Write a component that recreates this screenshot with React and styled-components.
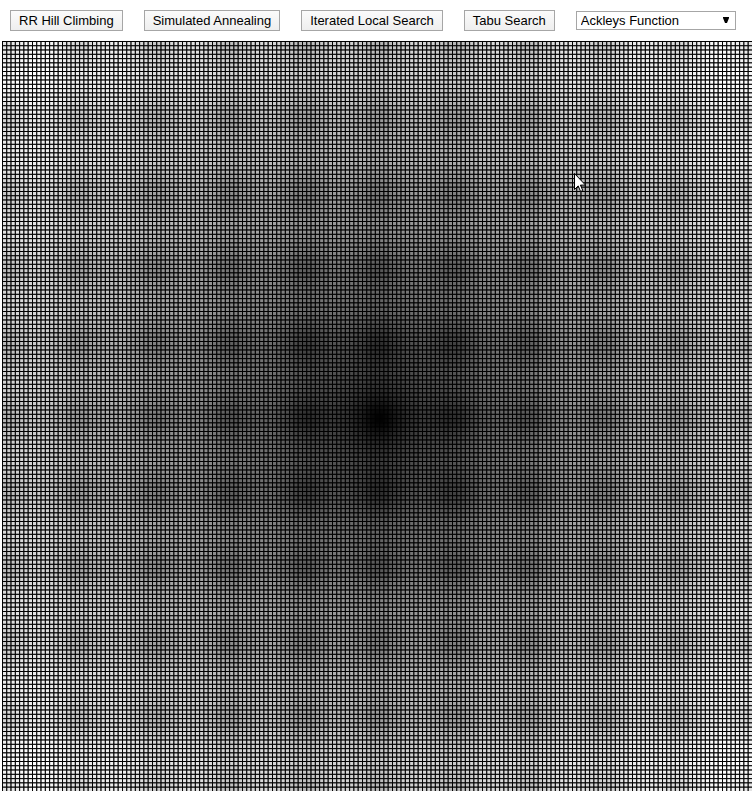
import React, { useEffect, useRef } from "react";
import styled, { createGlobalStyle } from "styled-components";

const GlobalStyle = createGlobalStyle`
  body {
    margin: 0;
    background: #fff;
    font-family: "Liberation Sans", Arial, sans-serif;
  }
`;

const Page = styled.main`
  position: relative;
  padding: 10px 1px 8px 2px;
`;

const Toolbar = styled.div`
  display: flex;
  flex-wrap: wrap;
  align-items: center;
  gap: 21px;
  padding: 0 8px 10px;
`;

const Button = styled.button`
  box-sizing: border-box;
  height: 21px;
  padding: 0 8px;
  border: 1px solid #a6a6a6;
  border-radius: 0;
  background: linear-gradient(#fbfbfb, #eeeeee);
  color: #000;
  font: 13px/15px "Liberation Sans", Arial, sans-serif;
  white-space: nowrap;
`;

const SelectBox = styled.label`
  position: relative;
  display: flex;
  width: 160px;
`;

const Select = styled.select`
  box-sizing: border-box;
  width: 100%;
  height: 19px;
  padding: 0 20px 0 4px;
  appearance: none;
  border: 1px solid #a6a6a6;
  border-radius: 0;
  background: #fff;
  color: #000;
  font: 13px/15px "Liberation Sans", Arial, sans-serif;
`;

const Arrow = styled.svg`
  position: absolute;
  top: 6px;
  right: 7px;
  width: 6px;
  height: 6px;
  pointer-events: none;
`;

const Surface = styled.canvas`
  display: block;
  width: 100%;
  aspect-ratio: 1;
`;

const Pointer = styled.svg`
  position: absolute;
  left: 574px;
  top: 173px;
  width: 12px;
  height: 19px;
  pointer-events: none;
`;

const algorithms = [
  "RR Hill Climbing",
  "Simulated Annealing",
  "Iterated Local Search",
  "Tabu Search",
];

const CELLS = 175;
const RANGE = 5;
const PEAK = 14.3;

function ackley(x, y) {
  return (
    -20 * Math.exp(-0.2 * Math.sqrt((x * x + y * y) / 2)) -
    Math.exp((Math.cos(2 * Math.PI * x) + Math.cos(2 * Math.PI * y)) / 2) +
    Math.E +
    20
  );
}

function drawSurface(canvas) {
  const size = canvas.clientWidth;
  canvas.width = size;
  canvas.height = size;
  const ctx = canvas.getContext("2d");
  const pitch = size / CELLS;
  const step = (2 * RANGE) / CELLS;
  // Half a pixel in, so that the first outline falls on whole pixels.
  ctx.translate(0.5, 0.5);
  ctx.strokeStyle = "#000";
  for (let row = 0; row < CELLS; row++) {
    for (let col = 0; col < CELLS; col++) {
      const value = ackley(col * step - RANGE, row * step - RANGE);
      const shade = Math.min(255, Math.round((value / PEAK) * 255));
      ctx.fillStyle = `rgb(${shade}, ${shade}, ${shade})`;
      ctx.fillRect(col * pitch, row * pitch, pitch, pitch);
      ctx.strokeRect(col * pitch, row * pitch, pitch, pitch);
    }
  }
}

export default function App() {
  const canvasRef = useRef(null);

  useEffect(() => {
    const redraw = () => drawSurface(canvasRef.current);
    redraw();
    window.addEventListener("resize", redraw);
    return () => window.removeEventListener("resize", redraw);
  }, []);

  return (
    <>
      <GlobalStyle />
      <Page>
        <Toolbar>
          {algorithms.map((name) => (
            <Button key={name} type="button">
              {name}
            </Button>
          ))}
          <SelectBox>
            <Select aria-label="Function" defaultValue="ackley">
              <option value="ackley">Ackleys Function</option>
            </Select>
            <Arrow viewBox="0 0 6 6" aria-hidden="true">
              <path d="M0 0h6v1L4 6H2L0 1z" />
            </Arrow>
          </SelectBox>
        </Toolbar>
        <Surface ref={canvasRef} role="img" aria-label="Ackleys Function" />
        <Pointer viewBox="0 0 12 19" aria-hidden="true">
          <path
            d="M.5.5v16l3.7-3.6 2.4 5.6 2.2-1-2.4-5.4h5.1z"
            fill="#fff"
            stroke="#000"
          />
        </Pointer>
      </Page>
    </>
  );
}
